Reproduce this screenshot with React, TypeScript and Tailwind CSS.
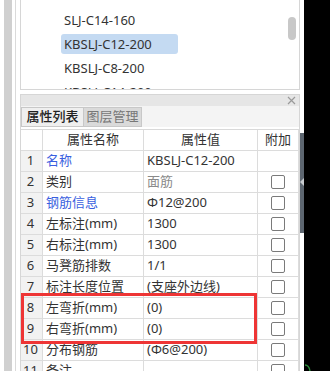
import React from "react";

const font = { fontFamily: '"Noto Sans", "Noto Sans CJK SC", sans-serif' };

type Row = { name: string; value: string; blue?: boolean; muted?: boolean; check?: boolean };

const rows: Row[] = [
  { name: "名称", value: "KBSLJ-C12-200", blue: true, check: false },
  { name: "类别", value: "面筋", muted: true },
  { name: "钢筋信息", value: "Φ12@200", blue: true },
  { name: "左标注(mm)", value: "1300" },
  { name: "右标注(mm)", value: "1300" },
  { name: "马凳筋排数", value: "1/1" },
  { name: "标注长度位置", value: "(支座外边线)" },
  { name: "左弯折(mm)", value: "(0)" },
  { name: "右弯折(mm)", value: "(0)" },
  { name: "分布钢筋", value: "(Φ6@200)" },
  { name: "备注", value: "" },
];

const items = ["SLJ-C14-160", "KBSLJ-C12-200", "KBSLJ-C8-200", "KBSLJ-C14-200"];

function Checkbox() {
  return <div className="h-[14px] w-[14px] rounded-[2px] border border-[#7a7a7a] bg-white" />;
}

export default function App() {
  return (
    <div className="flex h-[371px] w-[330px] overflow-hidden bg-black text-[13px] text-[#333]" style={font}>
      <div className="relative flex h-full w-[304px] shrink-0 bg-white">
        {/* left dock edge */}
        <div className="w-[4px] shrink-0" />
        <div className="w-[8px] shrink-0 bg-[#d0d0d0]" />
        <div className="w-[3px] shrink-0" />
        <div className="w-[1px] shrink-0 bg-[#dadada]" />
        <div className="w-[4px] shrink-0" />

        <div className="flex h-full w-[280px] shrink-0 flex-col overflow-hidden">
          {/* list box */}
          <div className="relative h-[90px] shrink-0 overflow-hidden border-x border-b border-[#d6d6d6]">
            <div className="flex flex-col pt-[8px] pl-[40px]">
              {items.map((it, i) => (
                <div key={it} className="flex h-[24px] items-center">
                  <div
                    className={
                      "flex h-[20px] w-[117px] items-center rounded-[3px] pl-[3px] leading-none " +
                      (i === 1 ? "bg-[#c4daf2]" : "")
                    }
                  >
                    {it}
                  </div>
                </div>
              ))}
            </div>
            <div className="absolute left-[267px] top-[17px] h-[23px] w-[8px] rounded-full bg-[#c8c8c8]" />
          </div>

          <div className="h-[4px] shrink-0" />

          {/* property panel */}
          <div className="flex shrink-0 flex-col border-x border-t border-[#d6d6d6]">
            <div className="flex h-[11px] items-center justify-end bg-[#e6e6e6] pr-[3px]">
              <svg width="9" height="9" viewBox="0 0 9 9" className="text-[#9a9a9a]">
                <path d="M1 1 L8 8 M8 1 L1 8" stroke="currentColor" strokeWidth="1.2" />
              </svg>
            </div>
            <div className="flex h-[21px] items-start bg-[#f4f4f4] pt-[1px]">
              <div className="flex h-[20px] w-[63px] items-center justify-center border border-[#c8c8c8] bg-[#efefef] font-medium text-[#222]">
                属性列表
              </div>
              <div className="flex h-[20px] w-[58px] items-center justify-center border-y border-r border-[#c8c8c8] bg-[#dadada] text-[#777]">
                图层管理
              </div>
            </div>
            <div className="h-[2px] bg-white" />

            {/* table */}
            <div className="grid grid-cols-[22px_101px_114px_41px] border-t border-[#d9d9d9]">
              <div className="h-[21px] border-b border-r border-[#dcdcdc]" />
              <div className="flex h-[21px] items-center justify-center border-b border-r border-[#dcdcdc]">属性名称</div>
              <div className="flex h-[21px] items-center justify-center border-b border-r border-[#dcdcdc]">属性值</div>
              <div className="flex h-[21px] items-center justify-center border-b border-r border-[#dcdcdc]">附加</div>
              {rows.map((r, i) => (
                <React.Fragment key={i}>
                  <div className="flex h-[21px] items-center justify-center border-b border-r border-[#dcdcdc] bg-[#f2f2f2] pr-[2px]">
                    {i + 1}
                  </div>
                  <div
                    className={
                      "flex h-[21px] items-center whitespace-nowrap border-b border-r border-[#dcdcdc] pl-[3px] " +
                      (r.blue ? "text-[#3a5fe0]" : "")
                    }
                  >
                    {r.name}
                  </div>
                  <div
                    className={
                      "flex h-[21px] items-center whitespace-nowrap border-b border-r border-[#dcdcdc] pl-[3px] " +
                      (r.muted ? "text-[#8a8a8a]" : "")
                    }
                  >
                    {r.value}
                  </div>
                  <div className="flex h-[21px] items-center justify-center border-b border-r border-[#dcdcdc] pr-[1px]">
                    {r.check === false ? null : <Checkbox />}
                  </div>
                </React.Fragment>
              ))}
            </div>
          </div>
        </div>

        {/* right edge strip */}
        <div className="flex w-[4px] shrink-0 flex-col">
          <div className="h-[133px] shrink-0" />
          <div className="flex h-[100px] shrink-0 flex-col items-center bg-[#5d6670] pt-[45px]">
            <svg width="4" height="8" viewBox="0 0 4 8">
              <path d="M4 0 L0 4 L4 8 Z" fill="#c8ccd0" />
            </svg>
          </div>
        </div>

        {/* annotation box */}
        <div className="absolute left-[21px] top-[293px] h-[51px] w-[236px] border-[3px] border-[#ee3535]" />
      </div>
      <div className="flex flex-1 items-end">
        <svg width="8" height="8" viewBox="0 0 8 8">
          <path d="M1 2 Q5 2 6 8" stroke="#2a8a3a" strokeWidth="1.3" fill="none" />
        </svg>
      </div>
    </div>
  );
}
